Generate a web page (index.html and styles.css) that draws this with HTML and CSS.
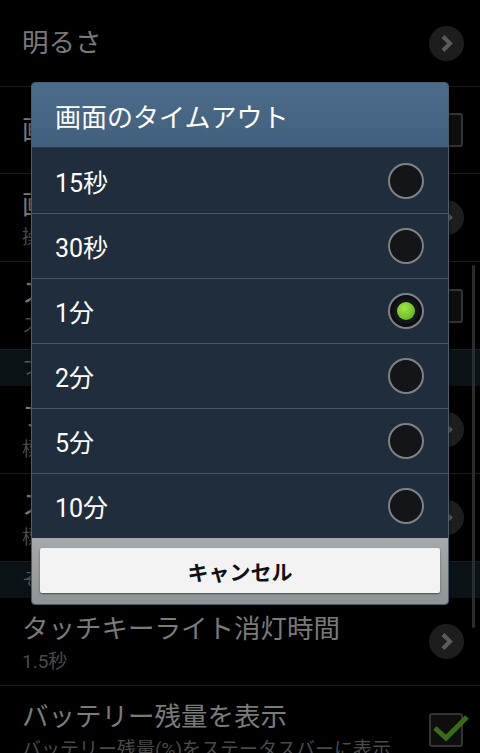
FILE: index.html
```html
<!DOCTYPE html>
<html lang="ja">

<head>
  <meta charset="UTF-8" />
  <meta name="viewport" content="width=device-width, initial-scale=1.0" />
  <title>画面のタイムアウト</title>
  <link rel="stylesheet" href="styles.css">
</head>

<body>
  <div class="screen">
    <div class="settings">
      <div class="row">
        <div class="text"><div class="title">明るさ</div></div>
        <span class="chev"><svg width="35" height="35" viewBox="0 0 35 35"><path d="M14 10.5 L21 17.5 L14 24.5" /></svg></span>
      </div>
      <div class="row">
        <div class="text"><div class="title">画面の自動回転</div></div>
        <span class="check"></span>
      </div>
      <div class="row two">
        <div class="text"><div class="title">画面のタイムアウト</div><div class="sub">操作しない状態が1分続くと消灯</div></div>
        <span class="chev"><svg width="35" height="35" viewBox="0 0 35 35"><path d="M14 10.5 L21 17.5 L14 24.5" /></svg></span>
      </div>
      <div class="row two">
        <div class="text"><div class="title">スマートステイ</div><div class="sub">スマートステイを有効にする</div></div>
        <span class="check"></span>
      </div>
      <div class="cat">フォント</div>
      <div class="row two">
        <div class="text"><div class="title">フォントスタイル</div><div class="sub">標準</div></div>
        <span class="chev"><svg width="35" height="35" viewBox="0 0 35 35"><path d="M14 10.5 L21 17.5 L14 24.5" /></svg></span>
      </div>
      <div class="row two">
        <div class="text"><div class="title">スクリーンモード</div><div class="sub">標準</div></div>
        <span class="chev"><svg width="35" height="35" viewBox="0 0 35 35"><path d="M14 10.5 L21 17.5 L14 24.5" /></svg></span>
      </div>
      <div class="cat">その他</div>
      <div class="row two">
        <div class="text"><div class="title">タッチキーライト消灯時間</div><div class="sub">1.5秒</div></div>
        <span class="chev"><svg width="35" height="35" viewBox="0 0 35 35"><path d="M14 10.5 L21 17.5 L14 24.5" /></svg></span>
      </div>
      <div class="row two">
        <div class="text"><div class="title">バッテリー残量を表示</div><div class="sub">バッテリー残量(%)をステータスバーに表示</div></div>
        <span class="check on"><svg width="40" height="40" viewBox="0 0 40 40"><path d="M4 16 L15 26 L36 5" /></svg></span>
      </div>
    </div>

    <div class="scrollbar"></div>

    <div class="dialog">
      <div class="dlg-title">画面のタイムアウト</div>
      <div class="opt">15秒<span class="radio"></span></div>
      <div class="opt">30秒<span class="radio"></span></div>
      <div class="opt">1分<span class="radio on"></span></div>
      <div class="opt">2分<span class="radio"></span></div>
      <div class="opt">5分<span class="radio"></span></div>
      <div class="opt">10分<span class="radio"></span></div>
      <div class="foot">
        <div class="cancel">キャンセル</div>
      </div>
    </div>
  </div>
</body>

</html>
```

FILE: styles.css
```css
html,
body {
  margin: 0;
  height: 100%;
  background: #000;
  font-family: 'Roboto', 'Noto Sans CJK JP', sans-serif;
  overflow: hidden;
}

.screen {
  position: relative;
  width: 480px;
  height: 753px;
  overflow: hidden;
}

/* dimmed settings list behind the dialog */
.row {
  display: flex;
  align-items: center;
  height: 86px;
  padding: 0 16px 0 22px;
  border-bottom: 1px solid #1c1c1c;
}

.row.two {
  align-items: flex-start;
  padding-top: 13px;
  height: 74px;
}

.row.two .chev,
.row.two .check {
  align-self: center;
  margin-top: -13px;
}

.text {
  flex: 1;
  min-width: 0;
}

.title {
  font-size: 26.5px;
  line-height: 36px;
  color: #7a7a7a;
  white-space: nowrap;
}

.sub {
  font-size: 19px;
  line-height: 30px;
  color: #4a4a4a;
  white-space: nowrap;
}

.chev {
  width: 35px;
  height: 35px;
  border-radius: 50%;
  background: #1d1d1d;
  flex: none;
}

.chev svg {
  display: block;
}

.chev path {
  fill: none;
  stroke: #5b5b5b;
  stroke-width: 4;
}

.check {
  position: relative;
  width: 34px;
  height: 34px;
  box-sizing: border-box;
  border: 2px solid #333;
  border-radius: 3px;
  background: #0e0e0e;
  flex: none;
  margin-right: 1px;
}

.check svg {
  position: absolute;
  left: 0;
  top: -3px;
}

.check path {
  fill: none;
  stroke: #3c6a1b;
  stroke-width: 5;
}

.cat {
  height: 36px;
  line-height: 36px;
  padding-left: 22px;
  background: #0b1216;
  color: #505a5f;
  font-size: 18px;
}

.scrollbar {
  position: absolute;
  left: 472px;
  top: 265px;
  width: 3px;
  height: 363px;
  border-radius: 2px;
  background: #2c2c2c;
}

/* dialog */
.dialog {
  position: absolute;
  left: 31px;
  top: 82px;
  width: 418px;
  box-sizing: border-box;
  border: 1px solid #4d5d6c;
  border-radius: 4px;
  overflow: hidden;
  box-shadow: 0 0 3px rgba(0, 0, 0, 0.8);
}

.dlg-title {
  height: 65px;
  box-sizing: border-box;
  display: flex;
  align-items: center;
  padding-left: 23px;
  font-size: 26px;
  color: #fff;
  background: linear-gradient(#4c6c8b, #41607c);
  border-bottom: 1px solid #2c3f52;
}

.opt {
  height: 65px;
  box-sizing: border-box;
  display: flex;
  align-items: center;
  padding: 0 24px 0 23px;
  background: #1f2d3c;
  border-top: 1px solid #475767;
  color: #fff;
  font-size: 25px;
}

.dlg-title + .opt {
  border-top-color: #1f2d3c;
}

.radio {
  margin-left: auto;
  width: 36px;
  height: 36px;
  box-sizing: border-box;
  border-radius: 50%;
  border: 2px solid #7e8286;
  background: #131519;
  display: grid;
  place-items: center;
}

.radio.on {
  box-shadow: inset 0 0 0 3px #0c0d10;
}

.radio.on::after {
  content: "";
  width: 18px;
  height: 18px;
  border-radius: 50%;
  background: radial-gradient(circle at 40% 35%, #9ee446, #5aa818);
}

.foot {
  padding: 10px 8px 11px;
  background: linear-gradient(#a5a9ac, #8f9497);
}

.cancel {
  height: 45px;
  display: flex;
  align-items: center;
  justify-content: center;
  background: #f3f3f3;
  border-radius: 2px;
  box-shadow: 0 1px 2px rgba(0, 0, 0, 0.5);
  font-size: 21px;
  font-weight: bold;
  color: #111;
}
```
